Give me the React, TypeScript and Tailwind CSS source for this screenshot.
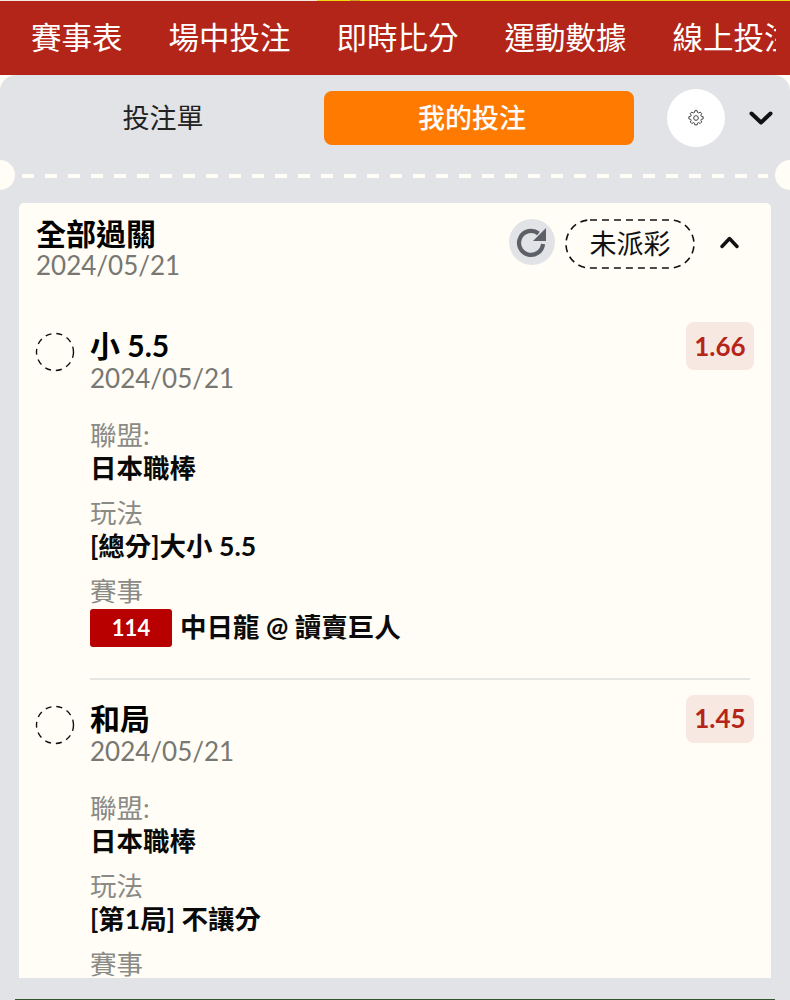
import React from "react";
const font = { fontFamily: '"Lato","Noto Sans CJK TC",sans-serif' };

function Dash() {
  return (
    <svg width="40" height="40" viewBox="0 0 40 40" className="shrink-0">
      <circle cx="20" cy="20" r="18.5" fill="none" stroke="#111" strokeWidth="1.4" strokeDasharray="6 5" />
    </svg>
  );
}

function Field({ label, children }: { label: string; children: React.ReactNode }) {
  return (
    <div className="mb-[12px]">
      <div className="text-[26.5px] leading-[32px] text-[#8a8a86]">{label}</div>
      <div className="text-[26.5px] leading-[34px] font-bold text-[#0a0a0a]">{children}</div>
    </div>
  );
}

function Bet({ title, odds, play, match }: { title: string; odds: string; play: string; match?: boolean }) {
  return (
    <div className="flex">
      <div className="w-[71px] pl-[16px] pt-[10px] shrink-0"><Dash /></div>
      <div className="flex-1 pr-[17px]">
        <div className="flex justify-between">
          <div>
            <div className="text-[30px] leading-[34px] font-bold text-black mt-[6px] mb-[1px]">{title}</div>
            <div className="text-[26px] leading-[30px] text-[#777773]">2024/05/21</div>
          </div>
          <div className="h-[48px] w-[68px] rounded-[8px] bg-[#f7e8e2] text-[#b52518] text-[26px] font-bold flex items-center justify-center">{odds}</div>
        </div>
        <div className="mt-[26px]">
          <Field label="聯盟:">日本職棒</Field>
          <Field label="玩法">{play}</Field>
          <div className="text-[26.5px] leading-[32px] text-[#8a8a86]">賽事</div>
          {match && (
            <div className="flex items-center gap-[8px] mt-[1px] text-[26.5px] font-bold text-[#0a0a0a]">
              <span className="w-[82px] h-[38px] rounded-[3px] bg-[#b80000] text-white text-[22px] font-bold flex items-center justify-center">114</span>
              中日龍 @ 讀賣巨人
            </div>
          )}
        </div>
      </div>
    </div>
  );
}

export default function App() {
  return (
    <div style={font} className="w-[790px] h-[1000px] overflow-hidden bg-[#fffdf5] flex flex-col">
      <div className="h-[1px] flex shrink-0 bg-[#f3d80c]">
        <div className="w-[317px] bg-[#f4e9e0]" />
        <div className="w-[33px]" />
        <div className="w-[10px] bg-[#d8a020]" />
      </div>
      <div className="h-[74px] bg-[#b32518] flex items-center gap-[46px] pl-[31px] overflow-hidden text-white text-[30.5px] whitespace-nowrap shrink-0">
        <span>賽事表</span><span>場中投注</span><span>即時比分</span><span>運動數據</span><span className="w-[103px] overflow-hidden shrink-0">線上投注</span>
      </div>
      <div className="flex-1 min-h-0 bg-[#e1e3e7] rounded-t-[16px] flex flex-col">
        <div className="h-[86px] flex items-center shrink-0">
          <div className="w-[326px] text-center text-[27px] text-[#222]">投注單</div>
          <div className="ml-[-2px] w-[310px] h-[54px] rounded-[8px] bg-[#ff7a00] text-white text-[27px] font-medium flex items-center justify-center pr-[14px]">我的投注</div>
          <div className="ml-[33px] w-[58px] h-[58px] rounded-full bg-white flex items-center justify-center">
            <svg width="16" height="16" viewBox="0 0 24 24" fill="none" stroke="#444" strokeWidth="1.5"><path d="M10.3 2.5h3.4l.5 2.7 1.7.8 2.4-1.4 2.3 2.4-1.4 2.3.8 1.7 2.7.5v3.4l-2.7.5-.8 1.7 1.4 2.3-2.3 2.4-2.4-1.4-1.7.8-.5 2.7h-3.4l-.5-2.7-1.7-.8-2.4 1.4-2.3-2.4 1.4-2.3-.8-1.7-2.7-.5v-3.4l2.7-.5.8-1.7-1.4-2.3 2.3-2.4 2.4 1.4 1.7-.8z" transform="translate(0 -1.5)" /><circle cx="12" cy="12" r="3.5" /></svg>
          </div>
          <svg className="ml-[24px]" width="24" height="16" viewBox="0 0 24 16" fill="none" stroke="#111" strokeWidth="4" strokeLinecap="round" strokeLinejoin="round"><path d="M2.5 3.5l9.5 9 9.5-9" /></svg>
        </div>
        <div className="relative h-[30px] shrink-0 flex items-center">
          <div className="absolute left-[-16px] top-[-1px] w-[31px] h-[30px] rounded-full bg-[#fffdf5]" />
          <div className="absolute right-[-16px] top-[-1px] w-[31px] h-[30px] rounded-full bg-[#fffdf5]" />
          <div className="mx-[22px] w-full h-[4px] bg-[repeating-linear-gradient(90deg,#fffdf5_0_12px,transparent_12px_23px)]" />
        </div>
        <div className="mx-[19px] mt-[12px] h-[775px] shrink-0 overflow-hidden rounded-t-[5px] bg-[#fffdf5]">
          <div className="flex items-start pl-[17px] pt-[13px] pr-[32px] h-[119px]">
            <div className="flex-1">
              <div className="text-[30px] leading-[35px] font-bold text-black">全部過關</div>
              <div className="text-[26px] leading-[28px] text-[#777773]">2024/05/21</div>
            </div>
            <div className="w-[46px] h-[46px] mt-[3px] rounded-full bg-[#e1e3e7] flex items-center justify-center">
              <svg width="34" height="34" viewBox="0 0 34 34" fill="none"><path d="M28 19a12 12 0 1 1-4.5-10.5" stroke="#5d6066" strokeWidth="4.2" /><path d="M31 3v13H18z" fill="#5d6066" /></svg>
            </div>
            <div className="relative ml-[10px] mt-[3px] w-[130px] h-[50px] flex items-center justify-center text-[27px] text-[#111]">
              <svg className="absolute inset-0" width="130" height="50" viewBox="0 0 130 50" fill="none"><rect x="1" y="1" width="128" height="48" rx="24" stroke="#111" strokeWidth="1.6" strokeDasharray="7 5" /></svg>
              未派彩
            </div>
            <svg className="ml-[25px] mt-[20px]" width="19" height="13" viewBox="0 0 19 13" fill="none" stroke="#111" strokeWidth="3.4" strokeLinecap="round" strokeLinejoin="round"><path d="M2 10.5l7.5-8 7.5 8" /></svg>
          </div>
          <Bet title="小 5.5" odds="1.66" play="[總分]大小 5.5" match />
          <div className="ml-[71px] mr-[21px] mt-[30px] mb-[15px] border-t-[2px] border-[#e5e5e2]" />
          <Bet title="和局" odds="1.45" play="[第1局] 不讓分" />
        </div>
        <div className="flex-1" />
        <div className="mx-[15px] h-[1px] bg-[#33552b] shrink-0" />
      </div>
    </div>
  );
}
